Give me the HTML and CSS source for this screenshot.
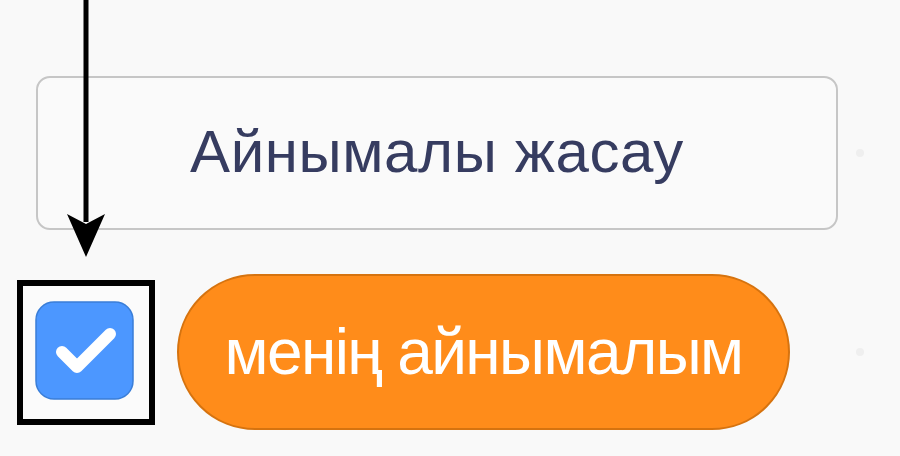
FILE: index.html
```html
<!DOCTYPE html>

<html lang="kk">
    <head>
        <title>Айнымалы жасау</title>

        <link rel="stylesheet" href="styles.css">

    </head>

    <body>
        <div class="page">
            <div class="row top-row">
                <button class="make-btn">Айнымалы жасау</button>
                <span class="dot"></span>
            </div>

            <div class="row var-row">
                <div class="check-frame">
                    <svg class="check" width="99" height="99" viewBox="0 0 99 99">
                        <rect x="1" y="1" width="97" height="97" rx="18" fill="#4c97ff" stroke="#3a7ed8" stroke-width="1.5"/>
                        <path d="M27 51 L42 66 L75 33" fill="none" stroke="#fff" stroke-width="12" stroke-linecap="round" stroke-linejoin="round"/>
                    </svg>
                </div>
                <div class="var-pill">менің айнымалым</div>
                <span class="dot"></span>
            </div>

            <!-- pointer arrow drawn over the button -->
            <svg class="arrow" width="120" height="262" viewBox="0 0 120 262">
                <line x1="86" y1="0" x2="86" y2="222" stroke="#000" stroke-width="5"/>
                <polygon points="67,214 86,257 105,214 86,224" fill="#000"/>
            </svg>
        </div>
    </body>
</html>
```

FILE: styles.css
```css
body, html {
    margin: 0;
    background: #f9f9f9;
}

.page {
    position: relative;
    width: 847px;
    padding: 76px 0 0 17px;
    font-family: "Liberation Sans", Arial, sans-serif;
}

.row {
    display: flex;
    align-items: center;
}

.make-btn {
    width: 802px;
    height: 154px;
    margin-left: 19px;
    border: 2px solid #c6c6c6;
    border-radius: 14px;
    background: #fafafa;
    color: #363c60;
    font-family: "Liberation Sans", Arial, sans-serif;
    font-size: 60px;
    letter-spacing: 0.6px;
    padding: 0 0 4px 0;
}

.dot {
    margin-left: auto;
    width: 8px;
    height: 8px;
    border-radius: 50%;
    background: #efefef;
}

.var-row {
    margin-top: 44px;
}

.check-frame {
    box-sizing: border-box;
    width: 138px;
    height: 145px;
    border: 6px solid #000;
    background: #fbfbfb;
    padding: 15px 0 0 12px;
}

.check {
    display: block;
}

.var-pill {
    box-sizing: border-box;
    width: 613px;
    height: 156px;
    margin-left: 22px;
    border: 2px solid #d6730f;
    border-radius: 78px;
    background: #ff8c1a;
    color: #fff;
    font-size: 64px;
    letter-spacing: -1.6px;
    display: flex;
    align-items: center;
    justify-content: center;
}

.arrow {
    position: absolute;
    left: 0;
    top: 0;
}
```
